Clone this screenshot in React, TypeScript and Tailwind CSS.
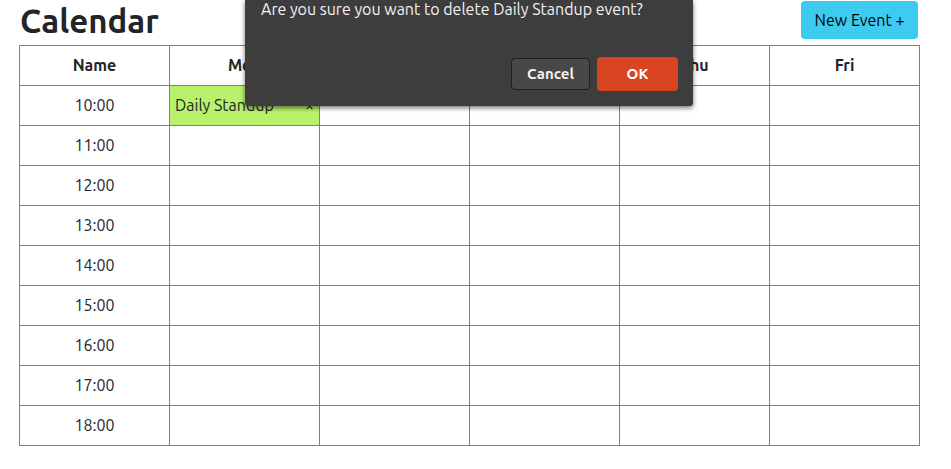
import React from "react";

const DAYS = ["Mon", "Tue", "Wed", "Thu", "Fri"];
const HOURS = ["10:00", "11:00", "12:00", "13:00", "14:00", "15:00", "16:00", "17:00", "18:00"];

interface CalendarEvent {
  name: string;
  day: string;
  hour: string;
}

const EVENTS: CalendarEvent[] = [{ name: "Daily Standup", day: "Mon", hour: "10:00" }];

function Header() {
  return (
    <header className="flex h-[45px] items-start justify-between pr-0.5 pl-px">
      <h1 className="text-[33px] leading-[42px] font-bold">Calendar</h1>
      <button
        type="button"
        className="mt-px h-[38px] w-[117px] rounded bg-[#3dccf0] whitespace-nowrap text-black"
      >
        New Event +
      </button>
    </header>
  );
}

function EventCell({ event }: { event: CalendarEvent }) {
  return (
    <td className="border border-[#808080] bg-[#b9f16c] px-[5px] pb-0.5">
      <div className="flex items-center justify-between">
        <span className="whitespace-nowrap">{event.name}</span>
        <button type="button" aria-label={`Delete ${event.name}`}>
          ×
        </button>
      </div>
    </td>
  );
}

function CalendarTable() {
  return (
    <table className="w-full table-fixed border-collapse text-center">
      <thead>
        <tr className="h-10">
          {["Name", ...DAYS].map((title) => (
            <th key={title} scope="col" className="border border-[#808080] pb-0.5 font-bold">
              {title}
            </th>
          ))}
        </tr>
      </thead>
      <tbody>
        {HOURS.map((hour) => (
          <tr key={hour} className="h-10">
            <th scope="row" className="border border-[#808080] pb-0.5 font-normal">
              {hour}
            </th>
            {DAYS.map((day) => {
              const event = EVENTS.find((e) => e.day === day && e.hour === hour);
              return event ? (
                <EventCell key={day} event={event} />
              ) : (
                <td key={day} className="border border-[#808080]" />
              );
            })}
          </tr>
        ))}
      </tbody>
    </table>
  );
}

function ConfirmDialog() {
  return (
    <div className="absolute top-0 right-px left-0 flex justify-center">
      <div
        role="alertdialog"
        aria-labelledby="confirm-message"
        className="w-full max-w-md rounded-b-[3px] bg-[#3d3d3d] px-4 pb-[15px] text-[#f2f2f2] shadow-[0_2px_5px_rgba(0,0,0,0.55)]"
      >
        <p id="confirm-message" className="h-[57px] leading-[18px] whitespace-nowrap">
          Are you sure you want to delete Daily Standup event?
        </p>
        <div className="-mr-px flex items-center justify-end gap-[7px] text-[15px] font-semibold">
          <button type="button" className="h-8 w-[79px] rounded border border-[#1f1f1f] bg-[#484848]">
            Cancel
          </button>
          <button type="button" className="h-[34px] w-[81px] rounded bg-[#d94522] text-white">
            OK
          </button>
        </div>
      </div>
    </div>
  );
}

export default function App() {
  return (
    <main className="min-h-screen bg-white pr-[31px] pl-[19px] font-['Ubuntu','Noto_Sans',sans-serif] text-base text-[#212529]">
      <div className="relative">
        <Header />
        <CalendarTable />
        <ConfirmDialog />
      </div>
    </main>
  );
}
